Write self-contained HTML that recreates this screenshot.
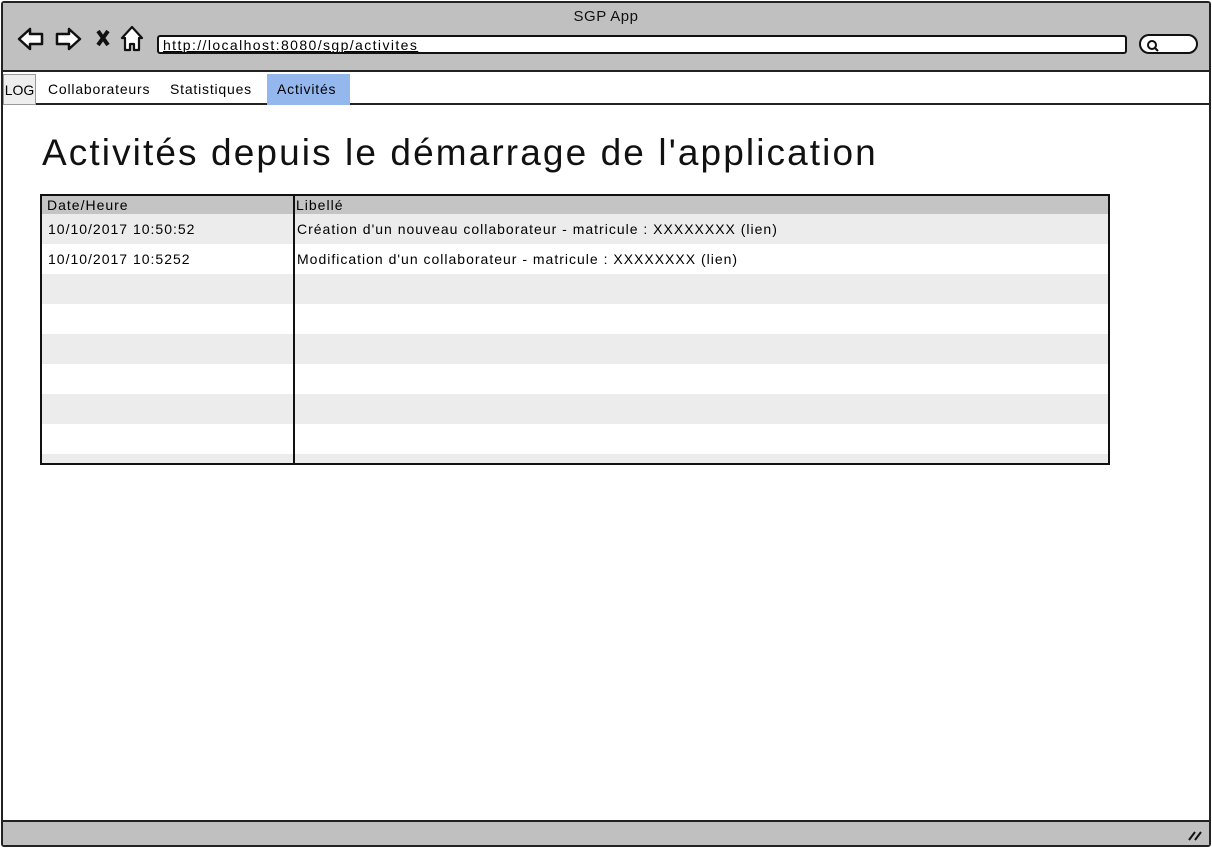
<!DOCTYPE html>
<html><head><meta charset="utf-8"><style>
*{margin:0;padding:0;box-sizing:border-box}
body{width:1212px;height:848px;background:#fff;font-family:"Liberation Sans",sans-serif;position:relative;overflow:hidden}
.frame{position:absolute;left:1px;top:1px;width:1210px;height:846px;border:2px solid #222;border-radius:3px}
.top{position:absolute;left:3px;top:3px;width:1206px;height:69px;background:#c0c0c0;border-bottom:2px solid #222}
.title{position:absolute;top:5px;width:100%;text-align:center;font-size:15px;color:#111;letter-spacing:0.5px}
.url{position:absolute;left:154px;top:32px;width:970px;height:19px;background:#fff;border:2px solid #111;border-radius:3px;font-size:14px;padding-left:4px;line-height:16px;text-decoration:underline;letter-spacing:1.4px}
.search{position:absolute;left:1136px;top:31px;width:59px;height:20px;background:#fff;border:2px solid #111;border-radius:10px}
.nav{position:absolute;left:3px;top:74px;width:1206px;height:31px;border-bottom:2px solid #222;font-size:14px;letter-spacing:0.8px}
.nav span{position:absolute;top:0;height:31px;line-height:30px}
.bottom{position:absolute;left:3px;top:820px;width:1206px;height:25px;background:#c0c0c0;border-top:2px solid #222}
h1{position:absolute;left:42px;top:132px;font-weight:normal;font-size:37px;color:#111;letter-spacing:2.1px}
.tbl{position:absolute;left:40px;top:194px;width:1070px;height:271px;border:2px solid #111;overflow:hidden}
.row{position:absolute;left:0;width:100%;height:30px;font-size:14px;line-height:30px;letter-spacing:1px}
.vl{position:absolute;left:251px;top:0;width:2px;height:100%;background:#111}
</style></head><body>
<div class="frame"></div>
<div class="top">
<div class="title">SGP App</div>
<svg style="position:absolute;left:12px;top:20px" width="135" height="32" viewBox="0 0 135 32">
<path d="M4 16 L15 6 L15 11 L27 11 L27 21 L15 21 L15 26 Z" fill="#fff" stroke="#111" stroke-width="2.5" stroke-linejoin="round"/>
<path d="M65 16 L54 6 L54 11 L42 11 L42 21 L54 21 L54 26 Z" fill="#fff" stroke="#111" stroke-width="2.5" stroke-linejoin="round"/>
<path d="M83 8 L93 22 M93 8 L83 22" stroke="#111" stroke-width="4"/>
<path d="M117 4 L107 15 L110 15 L110 27 L115 27 L115 21 L119 21 L119 27 L124 27 L124 15 L127 15 Z" fill="#fff" stroke="#111" stroke-width="2.2" stroke-linejoin="round"/>
</svg>
<div class="url">http://localhost:8080/sgp/activites</div>
<div class="search"><svg width="20" height="16" style="position:absolute;left:3px;top:1px"><circle cx="8" cy="8" r="4" fill="none" stroke="#111" stroke-width="2"/><path d="M11 11 L14 14" stroke="#111" stroke-width="2"/></svg></div>
</div>
<div class="nav">
<span style="left:0;width:33px;background:#eee;border:1px solid #999;text-align:center;letter-spacing:0">LOG</span>
<span style="left:45px">Collaborateurs</span>
<span style="left:167px">Statistiques</span>
<span style="left:264px;width:83px;background:#94b8ee;padding-left:10px">Activités</span>
</div>
<h1>Activités depuis le démarrage de l'application</h1>
<div class="tbl">
<div class="row" style="top:0;height:18px;line-height:18px;background:#c4c4c4"><span style="position:absolute;left:5px">Date/Heure</span><span style="position:absolute;left:254px">Libellé</span></div>
<div class="row" style="top:18px;background:#ececec"><span style="position:absolute;left:6px">10/10/2017 10:50:52</span><span style="position:absolute;left:255px">Création d'un nouveau collaborateur - matricule : XXXXXXXX (lien)</span></div>
<div class="row" style="top:48px"><span style="position:absolute;left:6px">10/10/2017 10:5252</span><span style="position:absolute;left:255px">Modification d'un collaborateur - matricule : XXXXXXXX (lien)</span></div>
<div class="row" style="top:78px;background:#ececec"></div>
<div class="row" style="top:138px;background:#ececec"></div>
<div class="row" style="top:198px;background:#ececec"></div>
<div class="row" style="top:258px;background:#ececec"></div>
<div class="vl"></div>
</div>
<div class="bottom"><svg style="position:absolute;right:6px;top:6px" width="16" height="14"><path d="M2 12 L8 4 M8 12 L14 4" stroke="#111" stroke-width="2"/></svg></div>
</body></html>
